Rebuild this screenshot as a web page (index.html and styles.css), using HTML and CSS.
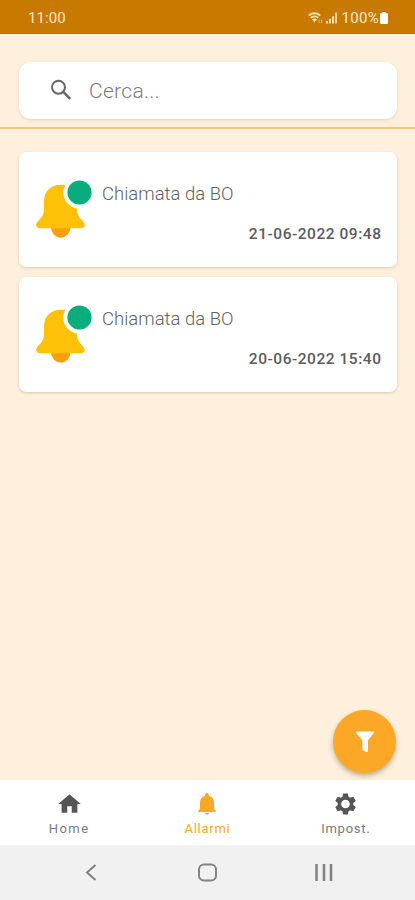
FILE: index.html
```html
<!DOCTYPE html>
<html lang="it">
<head>
<meta charset="utf-8">
<meta name="viewport" content="width=device-width, initial-scale=1">
<title>Allarmi</title>
<link rel="stylesheet" href="styles.css">
</head>
<body>
<div class="app">
  <header class="status">
    <span class="clock">11:00</span>
    <div class="indicators">
      <svg class="wifi" width="15" height="12" viewBox="0 0 15 12" fill="none" stroke="#f9dfb8" stroke-width="1.9"><path d="M.7 3.5Q6.500-1 12.300 3.500M2.700 5.800Q6.500 3 10.300 5.800"/><path d="M4 7.300Q6.500 5.600 9 7.300L6.500 10.500Z" fill="#f9dfb8" stroke="none"/><path d="M11.200 7.500v3.500M13.500 7.500v3.500" stroke-width="1" opacity=".6"/></svg>
      <svg class="signal" width="12" height="12" viewBox="0 0 12 12" fill="#f9dfb8"><path d="M0 9h2v2.500H0zM3 6.700h2v4.800H3zM6 4.200h2v7.300H6zM9.200.500h1.700v11H9.200z"/></svg>
      <span class="percent">100%</span>
      <svg class="battery" width="8" height="12" viewBox="0 0 8 12" fill="#fff"><path d="M2.300 0h3.400v1.300H7q1 0 1 1V11q0 1-1 1H1q-1 0-1-1V2.300q0-1 1-1h1.300z"/></svg>
    </div>
  </header>
  <div class="search-area">
    <label class="search">
      <svg width="22" height="22" viewBox="0 0 22 22" fill="none" stroke="#666"><circle cx="8.500" cy="8.200" r="6.500" stroke-width="2"/><path d="M13 12.700l7.200 7.200" stroke-width="2.500"/></svg>
      <span>Cerca...</span>
    </label>
  </div>
  <main class="list">
    <article class="card">
      <svg class="bell" width="56" height="60" viewBox="0 0 56 60"><path d="M15 47h19.500a9.750 10.700 0 0 1-19.500 0z" fill="#ff9d0a"/><path d="M24.500 4.800C14.500 4.800 8 12 8 21v8c0 5-2 8.500-5.500 11.500L1 42.500C-1.200 45 .8 48.300 4 48.300h41c3.600 0 5-3.300 2.900-5.800l-1.600-2C43 37.500 41 34 41 29V4.800z" fill="#ffc107"/><circle cx="43.500" cy="12.500" r="16.200" fill="#fff"/><circle cx="43.500" cy="12.500" r="12.100" fill="#08ad7c"/></svg>
      <div class="details"><h2>Chiamata da BO</h2><time>21-06-2022 09:48</time></div>
    </article>
    <article class="card">
      <svg class="bell" width="56" height="60" viewBox="0 0 56 60"><path d="M15 47h19.500a9.750 10.700 0 0 1-19.500 0z" fill="#ff9d0a"/><path d="M24.500 4.800C14.500 4.800 8 12 8 21v8c0 5-2 8.500-5.500 11.500L1 42.500C-1.200 45 .8 48.300 4 48.300h41c3.600 0 5-3.300 2.900-5.800l-1.600-2C43 37.500 41 34 41 29V4.800z" fill="#ffc107"/><circle cx="43.500" cy="12.500" r="16.200" fill="#fff"/><circle cx="43.500" cy="12.500" r="12.100" fill="#08ad7c"/></svg>
      <div class="details"><h2>Chiamata da BO</h2><time>20-06-2022 15:40</time></div>
    </article>
    <button class="fab" aria-label="Filtra"><svg width="20" height="22" viewBox="0 0 20 22"><path d="M1.500.5h17q1 .3.500 1.300l-6 7.500V20q-.2 1.500-1.500 1L8 19.200q-.7-.4-.7-1.200V9.300L1 1.800Q.5.8 1.500.5z" fill="#fff"/></svg></button>
  </main>
  <nav class="tabs">
    <a class="tab"><svg width="27" height="26" viewBox="0 0 24 24" preserveAspectRatio="none"><path d="M10 20v-6h4v6h5v-8h3L12 3 2 12h3v8z"/></svg><span>Home</span></a>
    <a class="tab active"><svg width="26" height="26" viewBox="0 0 26 26"><path d="M13 2c-1.300 0-1.900.8-1.900 2v.7C7.800 5.500 6 8.300 6 11.700V18l-1.800 1.800V21h17.600v-1.200L20 18v-6.300c0-3.400-1.800-6.200-5.100-7V4c0-1.200-.6-2-1.900-2zM11 22c0 2.300 4 2.300 4 0z"/></svg><span>Allarmi</span></a>
    <a class="tab"><svg width="27" height="27" viewBox="0 0 24 24"><path d="M19.140 12.940c.04-.3.060-.61.060-.94 0-.32-.02-.64-.07-.94l2.030-1.580c.18-.14.230-.41.120-.61l-1.920-3.320c-.12-.22-.37-.29-.59-.22l-2.390.96c-.5-.38-1.030-.7-1.620-.94l-.36-2.540c-.04-.24-.24-.41-.48-.41h-3.840c-.24 0-.43.17-.47.41l-.36 2.540c-.59.24-1.130.57-1.620.94l-2.390-.96c-.22-.08-.47 0-.59.22L2.740 8.870c-.12.21-.08.47.12.61l2.030 1.580c-.05.3-.09.63-.09.94s.02.64.07.94l-2.030 1.580c-.18.14-.23.41-.12.610l1.920 3.320c.12.22.37.29.59.22l2.390-.96c.5.38 1.030.7 1.620.94l.36 2.540c.05.24.24.41.48.41h3.840c.24 0 .44-.17.47-.41l.36-2.540c.59-.24 1.130-.56 1.620-.94l2.390.96c.22.08.47 0 .59-.22l1.920-3.320c.12-.22.07-.47-.12-.61l-2.010-1.580zM12 16a4 4 0 1 1 0-8 4 4 0 0 1 0 8z"/></svg><span>Impost.</span></a>
  </nav>
  <footer class="system">
    <svg width="20" height="22" viewBox="0 0 20 22"><path d="M14.500 3L6 10.500l8.500 7.500"/></svg>
    <svg width="22" height="22" viewBox="0 0 22 22"><rect x="2" y="2.500" width="17" height="16" rx="5"/></svg>
    <svg class="recents" width="20" height="22" viewBox="0 0 20 22"><path d="M2.500 2v17M10 2v17M17 2v17"/></svg>
  </footer>
</div>
</body>
</html>
```
FILE: styles.css
```css
* { box-sizing: border-box; }
body { margin: 0; font-family: Roboto, "Liberation Sans", sans-serif; background: #fef0dd; }
.app { height: 900px; display: flex; flex-direction: column; overflow: hidden; }
.status { height: 34px; flex: none; display: flex; justify-content: space-between; align-items: center; padding: 2px 27px 0 28px; background: #c87a00; border-bottom: 1px solid #c06d08; color: #fbe7c8; font-size: 15px; }
.clock { letter-spacing: .1px; }
.indicators { display: flex; align-items: center; }
.signal { margin-left: 3px; }
.percent { margin-left: 4px; letter-spacing: .3px; }
.battery { margin-left: 1px; }
.search-area { height: 95px; flex: none; padding: 27.500px 18px 0 19px; border-bottom: 2px solid #f4c47a; }
.search { height: 57px; display: flex; align-items: center; gap: 17px; padding-left: 31px; background: #fff; border-radius: 12px; box-shadow: 0 1px 3px rgba(130, 100, 50, .22); color: #7c7c7c; font-size: 21px; font-weight: 300; }
.search span { padding-top: 2px; letter-spacing: .3px; }
.list { position: relative; flex: 1; display: flex; flex-direction: column; gap: 9.500px; padding: 23px 18px 0 19px; }
.card { height: 115px; display: flex; padding: 28px 16px 0 17px; background: #fff; border-radius: 7px; box-shadow: 0 1px 3px rgba(130, 100, 50, .28); }
.bell { flex: none; }
.details { flex: 1; display: flex; flex-direction: column; padding: 3px 0 0 10px; }
h2 { margin: 0; color: #626262; font-size: 18.500px; line-height: 23px; font-weight: 300; letter-spacing: 0; }
time { align-self: flex-end; margin-top: 18px; margin-right: -.5px; color: #5c5c5c; font-size: 15.500px; line-height: 20px; font-weight: 500; letter-spacing: .53px; }
.fab { position: absolute; right: 19px; bottom: 7px; width: 63px; height: 63px; padding: 0; border: 0; border-radius: 50%; display: grid; place-items: center; background: #fca726; box-shadow: 0 3px 5px rgba(100, 75, 35, .4); }
.tabs { position: relative; height: 65px; flex: none; display: grid; grid-template-columns: repeat(3, 1fr); background: #fff; }
.tab { display: flex; flex-direction: column; align-items: center; padding-top: 11px; color: #7a7a7a; font-size: 13px; letter-spacing: .75px; }
.tab:first-child { letter-spacing: 1.4px; }
.tab svg { height: 26px; fill: #555; }
.tab span { line-height: 16px; margin-top: 4px; }
.tab.active { color: #fca726; }
.tab.active svg { fill: #fca726; }
.system { height: 55px; flex: none; display: flex; justify-content: space-between; align-items: center; padding: 0 81px; background: #f1f1f1; }
.system svg { fill: none; stroke: #828282; stroke-width: 2; }
.system .recents { stroke-width: 2.500; }
```
